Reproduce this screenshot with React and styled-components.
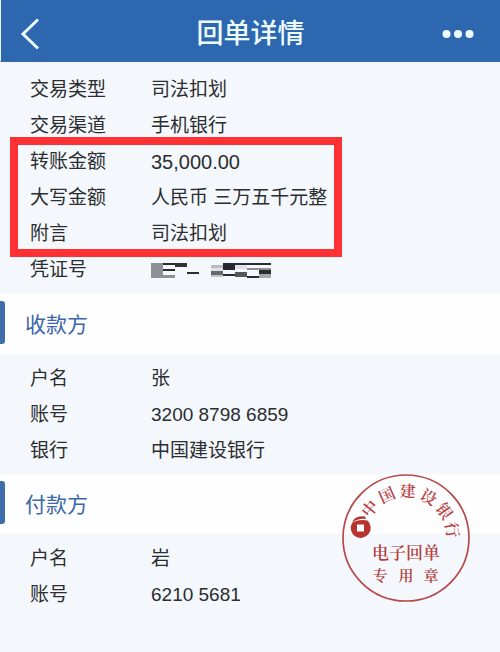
import React from "react";
import styled, { createGlobalStyle } from "styled-components";

const GlobalStyle = createGlobalStyle`
  *, *::before, *::after { box-sizing: border-box; }
  body {
    margin: 0;
    background: #f4f8fc;
    color: #2b2d31;
    font-family: "Liberation Sans", "Noto Sans CJK SC", sans-serif;
  }
`;

const Page = styled.main`
  min-height: 100vh;
  overflow: hidden;
`;

const Header = styled.header`
  display: grid;
  grid-template-columns: 56px 1fr 56px;
  align-items: center;
  height: 62px;
  padding: 6px 0 0;
  background: #2d67af;
  border-bottom: 1px solid #3a67a3;
  border-left: 1px solid #e9f3fb;
  color: #ecfcff;
`;

const Title = styled.h1`
  margin: 0;
  font-size: 27px;
  line-height: 40px;
  font-weight: 500;
  text-align: center;
`;

const IconButton = styled.button`
  display: flex;
  align-items: center;
  height: 40px;
  padding: ${(p) => (p.$end ? "0 26px 0 0" : "0 0 0 19px")};
  justify-content: ${(p) => (p.$end ? "flex-end" : "flex-start")};
  border: 0;
  background: transparent;
  color: inherit;
  cursor: pointer;

  svg { flex: none; }
`;

const Section = styled.section`
  position: relative;
`;

const SectionTitle = styled.h2`
  display: flex;
  align-items: center;
  height: 60px;
  margin: 0;
  padding-bottom: 3px;
  background: #fefeff;
  color: #3c66a8;
  font-size: 21px;
  font-weight: 400;

  &::before {
    content: "";
    width: 5px;
    height: 43px;
    margin-right: 20px;
    border-radius: 0 3px 3px 0;
    background: #3f6dab;
  }
`;

const Details = styled.dl`
  margin: 0;
  padding: ${(p) => (p.$first ? "10px 0 6px 30px" : "7px 0 5px 30px")};
`;

const Row = styled.div`
  display: grid;
  grid-template-columns: 121px 1fr;
  align-items: center;
  min-height: 36px;
  font-size: 19px;
  line-height: 28px;
`;

const Label = styled.dt`
  margin: 0;
`;

const Value = styled.dd`
  display: flex;
  align-items: center;
  margin: 0;
  font-size: ${(p) => (p.$amount ? "20px" : "19px")};
`;

const Highlighted = styled.div`
  position: relative;
  width: fit-content;

  &::after {
    content: "";
    position: absolute;
    inset: -7px -15px -5px -20px;
    border: 8px solid #fd3134;
    pointer-events: none;
  }
`;

const Stamp = styled.svg`
  position: absolute;
  top: 0;
  right: 30px;
  width: 128px;
  height: 128px;
  fill: #b5403f;
  font-family: "Noto Serif CJK SC", "Noto Sans CJK SC", serif;
  font-weight: 600;
`;

const MOSAIC = [
  [0, 0, 15, "#8e9095"],
  [12, 0, 2, "#2a2c31"], [12, 6, 2, "#2a2c31"], [12, 12, 3, "#8e9095"],
  [24, 0, 4, "#2f3136"],
  [36, 9, 2, "#2a2c31"],
  [60, 2, 3, "#b9bcc0"], [60, 5, 3, "#e0e3e6"], [60, 8, 4, "#66686d"], [60, 12, 2, "#bfc2c6"],
  [72, 0, 7, "#26282d"], [72, 11, 2, "#2a2c31"],
  [84, 0, 2, "#2a2c31"], [84, 2, 4, "#dfe2e5"], [84, 9, 5, "#55575c"],
  [96, 0, 2, "#2a2c31"], [96, 5, 2, "#8e9095"], [96, 13, 2, "#2a2c31"],
  [108, 0, 2, "#2a2c31"], [108, 5, 2, "#8e9095"], [108, 7, 4, "#2a2c31"], [108, 11, 4, "#a4a7ab"],
];

function MaskedNumber() {
  return (
    <svg width="120" height="15" role="img" aria-label="凭证号已遮挡" shapeRendering="crispEdges">
      {MOSAIC.map(([x, y, h, fill]) => (
        <rect key={`${x}-${y}`} x={x} y={y} width="12" height={h} fill={fill} />
      ))}
    </svg>
  );
}

const ARC_SIZE = 16;
const ARC_RADIUS = 47;
const ARC_ANGLES = [-51, -24, 2, 29, 55, 80];

// Glyph origins sit at the lower left, so each is shifted back by half a glyph along its own axes.
const ARC_POINTS = ARC_ANGLES.map((deg) => {
  const a = (deg * Math.PI) / 180;
  const dx = -ARC_SIZE / 2;
  const dy = ARC_SIZE * 0.38 - ARC_RADIUS;
  return [
    64 + dx * Math.cos(a) - dy * Math.sin(a),
    64 + dx * Math.sin(a) + dy * Math.cos(a),
  ];
});

function BankStamp() {
  return (
    <Stamp viewBox="0 0 128 128">
      <circle cx="64" cy="64" r="63" fill="none" stroke="#b8494a" strokeWidth="1.7" />
      <text
        fontSize={ARC_SIZE}
        x={ARC_POINTS.map((p) => p[0]).join(" ")}
        y={ARC_POINTS.map((p) => p[1]).join(" ")}
        rotate={ARC_ANGLES.join(" ")}
      >
        中国建设银行
      </text>
      <path
        fillRule="evenodd"
        fill="#b53330"
        d="M11 46.500 Q15 41.500 23 42.500 L24 45 Q16 44 10.500 48.500 Z M10 49 Q16 45 25.500 46.500 A10 10 0 1 1 10 49 Z M15 50.500 H22 V57.500 H15 Z"
      />
      <text x="64" y="85" fontSize="17" textAnchor="middle">电子回单</text>
      <text x="38 64 89" y="107" fontSize="15" textAnchor="middle">专用章</text>
    </Stamp>
  );
}

function Entry({ label, amount, children }) {
  return (
    <Row>
      <Label>{label}</Label>
      <Value $amount={amount}>{children}</Value>
    </Row>
  );
}

export default function App() {
  return (
    <Page>
      <GlobalStyle />
      <Header>
        <IconButton type="button" aria-label="返回">
          <svg width="20" height="32" viewBox="0 0 20 32" fill="none" stroke="currentColor" strokeWidth="3">
            <path d="M18 1.500 L3 16 L18 30.500" />
          </svg>
        </IconButton>
        <Title>回单详情</Title>
        <IconButton type="button" aria-label="更多" $end>
          <svg width="32" height="10" viewBox="0 0 32 10" fill="currentColor">
            <circle cx="4.500" cy="5" r="4" />
            <circle cx="16" cy="5" r="4" />
            <circle cx="27.500" cy="5" r="4" />
          </svg>
        </IconButton>
      </Header>
      <Section>
        <Details $first>
          <Entry label="交易类型">司法扣划</Entry>
          <Entry label="交易渠道">手机银行</Entry>
          <Highlighted>
            <Entry label="转账金额" amount>35,000.00</Entry>
            <Entry label="大写金额">人民币 三万五千元整</Entry>
            <Entry label="附言">司法扣划</Entry>
          </Highlighted>
          <Entry label="凭证号"><MaskedNumber /></Entry>
        </Details>
      </Section>
      <Section>
        <SectionTitle>收款方</SectionTitle>
        <Details>
          <Entry label="户名">张</Entry>
          <Entry label="账号">3200 8798 6859</Entry>
          <Entry label="银行">中国建设银行</Entry>
        </Details>
      </Section>
      <Section>
        <SectionTitle>付款方</SectionTitle>
        <Details>
          <Entry label="户名">岩</Entry>
          <Entry label="账号">6210 5681</Entry>
        </Details>
        <BankStamp />
      </Section>
    </Page>
  );
}
